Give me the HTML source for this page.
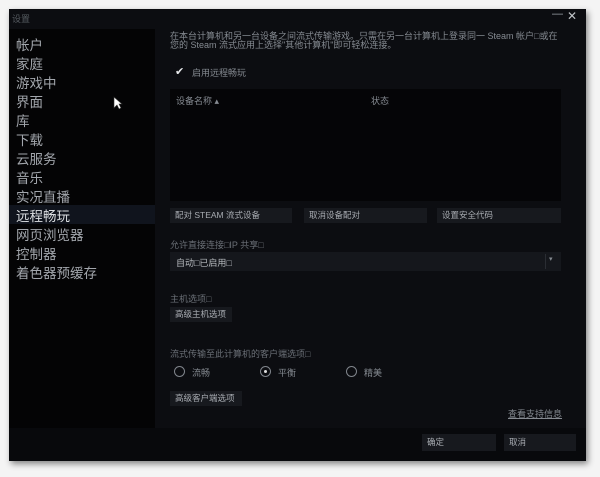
<!DOCTYPE html>
<html><head><meta charset="utf-8"><style>
*{margin:0;padding:0;box-sizing:border-box}
body{width:600px;height:477px;background:#f4f4f4;position:relative;overflow:hidden;font-family:"Liberation Sans","Noto Sans CJK SC",sans-serif;color:#b8bcc2}
.win{position:absolute;left:9px;top:9px;width:577px;height:452px;background:#0c0d11;box-shadow:2px 3px 6px rgba(0,0,0,.45)}
.side{position:absolute;left:0;top:20px;width:146px;height:399px;background:#040405}
.a{position:absolute;font-size:9px;color:#858a91;white-space:nowrap}
.nav{position:absolute;left:7px;font-size:13.5px;color:#a2a6ac;line-height:19px}
.sel{position:absolute;left:0;top:196px;width:146px;height:19px;background:#10141d}
.btn{position:absolute;height:15px;background:#17191e;font-size:8.5px;color:#a8acb2;padding-left:5px;line-height:15px;white-space:nowrap}
.rad{position:absolute;width:11px;height:11px;border:1px solid #80858c;border-radius:50%}
</style></head><body>
<div class="win">
 <div class="a" style="left:3px;top:3px;color:#555a60;font-size:9px">设置</div>
 <div class="a" style="left:543px;top:-1px;font-size:11px;color:#9aa0a6">—</div>
 <div class="a" style="left:558px;top:0px;font-size:12px;color:#c0c4c8">✕</div>
 <div class="side"></div>
 <div class="sel"></div>
 <div class="nav" style="top:27px">帐户<br>家庭<br>游戏中<br>界面<br>库<br>下载<br>云服务<br>音乐<br>实况直播<br><span style="color:#dcdfe2">远程畅玩</span><br>网页浏览器<br>控制器<br>着色器预缓存</div>
 <svg style="position:absolute;left:104px;top:87px" width="10" height="14" viewBox="0 0 10 14"><path d="M1 1 L1 12 L4 9 L6 13 L8 12 L6 8 L9 8 Z" fill="#fff" stroke="#333" stroke-width=".6"/></svg>
 <div style="position:absolute;left:0;top:419px;width:577px;height:33px;background:#08090c"></div>
 <div class="a" style="left:161px;top:23px;line-height:9px">在本台计算机和另一台设备之间流式传输游戏。只需在另一台计算机上登录同一 Steam 帐户□或在<br>您的 Steam 流式应用上选择"其他计算机"即可轻松连接。</div>
 <div class="a" style="left:166px;top:56px;color:#e8eaec;font-size:11px">✔</div>
 <div class="a" style="left:183px;top:57px">启用远程畅玩</div>
 <div style="position:absolute;left:161px;top:80px;width:391px;height:112px;background:#050507"></div>
 <div class="a" style="left:167px;top:85px">设备名称 ▴</div>
 <div class="a" style="left:362px;top:85px">状态</div>
 <div class="btn" style="left:161px;top:199px;width:122px">配对 STEAM 流式设备</div>
 <div class="btn" style="left:295px;top:199px;width:123px">取消设备配对</div>
 <div class="btn" style="left:428px;top:199px;width:124px">设置安全代码</div>
 <div class="a" style="left:161px;top:229px;color:#6a6f76">允许直接连接□IP 共享□</div>
 <div style="position:absolute;left:161px;top:243px;width:391px;height:19px;background:#15171c"></div>
 <div style="position:absolute;left:536px;top:245px;width:1px;height:15px;background:#2a2d33"></div>
 <div class="a" style="left:167px;top:247px;color:#b8bcc0">自动□已启用□</div>
 <div class="a" style="left:540px;top:246px;font-size:7px">▾</div>
 <div class="a" style="left:161px;top:283px;color:#6a6f76">主机选项□</div>
 <div class="btn" style="left:161px;top:298px;width:62px">高级主机选项</div>
 <div class="a" style="left:161px;top:338px;color:#6a6f76">流式传输至此计算机的客户端选项□</div>
 <div class="rad" style="left:165px;top:357px"></div>
 <div class="a" style="left:183px;top:357px">流畅</div>
 <div class="rad" style="left:251px;top:357px"><div style="position:absolute;left:3px;top:3px;width:3px;height:3px;background:#ddd;border-radius:50%"></div></div>
 <div class="a" style="left:269px;top:357px">平衡</div>
 <div class="rad" style="left:337px;top:357px"></div>
 <div class="a" style="left:355px;top:357px">精美</div>
 <div class="btn" style="left:161px;top:382px;width:72px">高级客户端选项</div>
 <div class="a" style="left:499px;top:398px;text-decoration:underline">查看支持信息</div>
 <div class="btn" style="left:413px;top:425px;width:74px;height:17px;line-height:17px">确定</div>
 <div class="btn" style="left:495px;top:425px;width:72px;height:17px;line-height:17px">取消</div>
</div>
</body></html>
